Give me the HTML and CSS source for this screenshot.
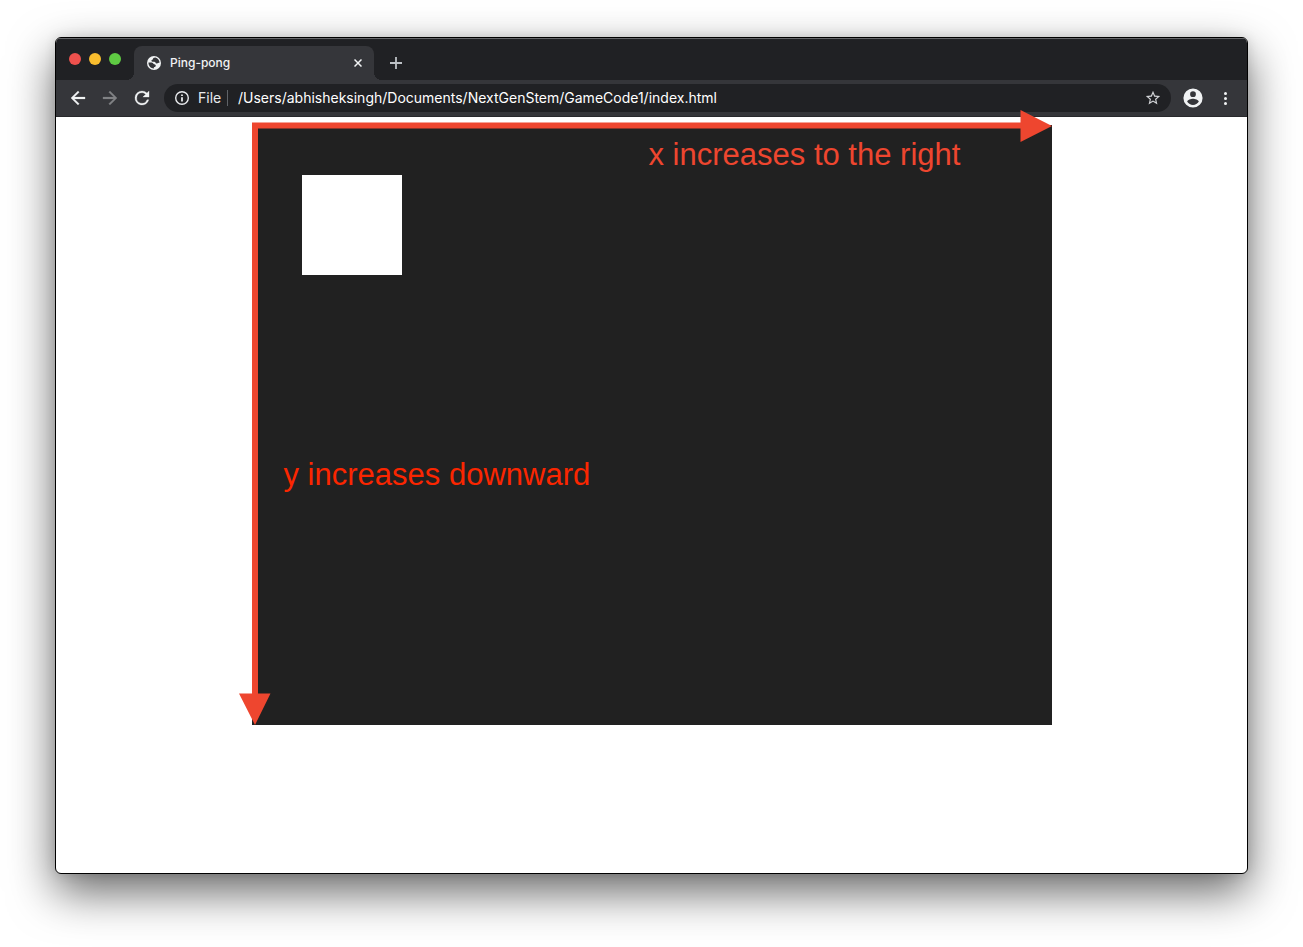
FILE: index.html
```html
<!DOCTYPE html>
<html lang="en">
<head>
<meta charset="utf-8">
<title>Ping-pong</title>
<link rel="stylesheet" href="styles.css">
</head>
<body>
<div class="window">
  <header class="tab-strip">
    <div class="lights">
      <button class="light close" aria-label="Close window"></button>
      <button class="light minimize" aria-label="Minimize window"></button>
      <button class="light maximize" aria-label="Maximize window"></button>
    </div>
    <div class="tab">
      <svg class="favicon" viewBox="0 0 14 14" aria-hidden="true">
        <circle cx="7" cy="7" r="7" fill="#f1f3f4"/>
        <path d="M8.300 1.500C6.800 1.700 5.800 2.300 5.800 3.400C5 3.600 4.300 4.200 4.500 5C4.800 5.900 5.800 5.600 7.200 5.700C8.600 5.800 8.400 7.300 9.600 7.400C10.800 7.500 11.500 6.700 12.500 6.700C12.600 4.200 11 2.100 8.300 1.500ZM1.500 6.500C1.300 9.700 3.800 12.400 6.900 12.500V11.300C7.900 11.200 8.800 10.600 8.800 9.600C8.800 8.300 7.400 8.600 6.700 8C6 7.300 5.700 6.500 4.500 6.500Z" fill="#35363a"/>
      </svg>
      <span class="tab-title">Ping-pong</span>
      <button class="tab-close" aria-label="Close tab">
        <svg width="8" height="8" viewBox="0 0 8 8" fill="none" stroke="#f1f3f4" stroke-width="1.500"><path d="M.5 .5L7.500 7.500M7.500 .5L.5 7.500"/></svg>
      </button>
    </div>
    <button class="new-tab" aria-label="New tab">
      <svg width="12" height="12" viewBox="0 0 12 12" fill="none" stroke="#bdc1c6" stroke-width="1.800"><path d="M6 0V12M0 6H12"/></svg>
    </button>
  </header>
  <nav class="toolbar">
    <button class="tool" aria-label="Back">
      <svg width="22" height="22" viewBox="-.5 -.5 25 25" fill="#f1f3f4" stroke="#f1f3f4" stroke-width=".3"><path d="M20 11H7.830l5.590-5.590L12 4l-8 8 8 8 1.410-1.410L7.830 13H20z"/></svg>
    </button>
    <button class="tool" aria-label="Forward">
      <svg width="22" height="22" viewBox="-.5 -.5 25 25" fill="#818285" stroke="#818285" stroke-width=".3"><path d="M12 4l-1.410 1.410L16.170 11H4v2h12.170l-5.580 5.590L12 20l8-8z"/></svg>
    </button>
    <button class="tool" aria-label="Reload">
      <svg width="22" height="22" viewBox="-.5 -.5 25 25" fill="#f1f3f4" stroke="#f1f3f4" stroke-width=".3"><path d="M17.650 6.350A7.960 7.960 0 0 0 12 4a8 8 0 1 0 7.730 10h-2.080A6 6 0 1 1 12 6c1.660 0 3.140.69 4.220 1.780L13 11h7V4z"/></svg>
    </button>
    <div class="address">
      <svg class="info" viewBox="0 0 16 16" aria-hidden="true">
        <circle cx="8" cy="8" r="6.300" fill="none" stroke="#e8eaed" stroke-width="1.400"/>
        <path d="M7.100 7.200H8.900V11.500H7.100ZM7.100 4.400H8.900V6.100H7.100Z" fill="#e8eaed"/>
      </svg>
      <label class="scheme" for="url">File</label>
      <input class="url" id="url" type="text" value="/Users/abhisheksingh/Documents/NextGenStem/GameCode1/index.html">
      <button class="star" aria-label="Bookmark this page">
        <svg width="18" height="18" viewBox="-.5 -.5 25 25" fill="#d0d2d5"><path d="M22 9.240l-7.190-.62L12 2 9.190 8.630 2 9.240l5.460 4.730L5.820 21 12 17.270 18.180 21l-1.630-7.030zM12 15.400l-3.760 2.270 1-4.280-3.320-2.880 4.380-.38L12 6.100l1.710 4.040 4.380.38-3.320 2.880 1 4.280z"/></svg>
      </button>
    </div>
    <button class="tool" aria-label="Profile">
      <svg width="24" height="24" viewBox="-.5 -.5 25 25" fill="#f1f3f4"><path d="M12 2a10 10 0 1 0 0 20 10 10 0 0 0 0-20zm0 3a3 3 0 1 1 0 6 3 3 0 0 1 0-6zm0 14.200a7.200 7.200 0 0 1-6-3.220c.03-1.990 4-3.080 6-3.080s5.970 1.090 6 3.080a7.200 7.200 0 0 1-6 3.220z"/></svg>
    </button>
    <button class="tool" aria-label="Menu">
      <svg width="3" height="13" viewBox="0 0 3 13" fill="#f1f3f4"><circle cx="1.500" cy="1.500" r="1.500"/><circle cx="1.500" cy="6.500" r="1.500"/><circle cx="1.500" cy="11.500" r="1.500"/></svg>
    </button>
  </nav>
  <main class="page">
    <div class="board">
      <div class="square"></div>
      <svg class="axes" viewBox="0 0 800 600" fill="#ee462f" aria-hidden="true">
        <path d="M0 -2.500H768.500V-15L800 1L768.500 17V3.500H6V568.500H18.500L3 600L-13 568.500H0Z"/>
      </svg>
      <p class="note note-x">x increases to the right</p>
      <p class="note note-y">y increases downward</p>
    </div>
  </main>
</div>
</body>
</html>
```
FILE: styles.css
```css
* {
  box-sizing: border-box;
}

body {
  margin: 0;
  min-height: 100vh;
  padding: 37px 55px 73px;
  display: flex;
  background: #fff;
  font-family: Inter, "Liberation Sans", sans-serif;
}

button {
  display: flex;
  align-items: center;
  justify-content: center;
  padding: 0;
  border: 0;
  background: none;
}

.window {
  flex: 1;
  min-width: 0;
  display: flex;
  flex-direction: column;
  border: 1px solid #000;
  border-radius: 6px;
  overflow: hidden;
  background: #fff;
  box-shadow: 0 18px 46px rgba(0, 0, 0, 0.6), 0 0 12px rgba(0, 0, 0, 0.12);
}

.tab-strip {
  height: 42px;
  display: flex;
  align-items: flex-end;
  padding-left: 13px;
  background: #202124;
  box-shadow: inset 0 1px #66676a;
}

.lights {
  height: 42px;
  display: flex;
  align-items: center;
  gap: 8px;
  margin-right: 13px;
}

.light {
  width: 12px;
  height: 12px;
  border-radius: 50%;
}

.close {
  background: #ee514d;
}

.minimize {
  background: #f9bd2e;
}

.maximize {
  background: #5fcb43;
}

.tab {
  position: relative;
  width: 240px;
  height: 34px;
  display: flex;
  align-items: center;
  padding: 0 8px 0 13px;
  border-radius: 8px 8px 0 0;
  background: #35363a;
}

.tab::before,
.tab::after {
  content: "";
  position: absolute;
  bottom: 0;
  width: 8px;
  height: 8px;
}

.tab::before {
  right: 100%;
  background: radial-gradient(circle at 0 0, transparent 8px, #35363a 8px);
}

.tab::after {
  left: 100%;
  background: radial-gradient(circle at 100% 0, transparent 8px, #35363a 8px);
}

.favicon {
  width: 14px;
  height: 14px;
  margin-right: 9px;
}

.tab-title {
  flex: 1;
  color: #f1f3f4;
  font-size: 12px;
  line-height: 16px;
  font-weight: 500;
}

.tab-close {
  width: 16px;
  height: 16px;
}

.new-tab {
  width: 28px;
  height: 34px;
  margin-left: 8px;
}

.toolbar {
  height: 37px;
  display: flex;
  align-items: center;
  padding: 0 6px;
  background: #35363a;
  border-bottom: 1px solid #28292c;
}

.tool {
  flex: none;
  width: 32px;
  height: 28px;
}

.address {
  flex: 1;
  min-width: 0;
  height: 28px;
  display: flex;
  align-items: center;
  margin: 0 6px;
  padding: 0 9px 0 10px;
  border-radius: 14px;
  background: #202124;
}

.info {
  flex: none;
  width: 16px;
  height: 16px;
  margin-right: 8px;
}

.scheme {
  width: 30px;
  border-right: 1px solid #5f6368;
  color: #e8eaed;
  font-size: 14px;
  line-height: 16px;
}

.url {
  flex: 1;
  min-width: 0;
  padding: 0 0 0 10px;
  border: 0;
  outline: 0;
  background: none;
  color: #fff;
  font-family: inherit;
  font-size: 14px;
  line-height: 16px;
}

.page {
  flex: 1;
  display: flex;
  justify-content: center;
  align-items: flex-start;
  padding: 8px;
}

.board {
  position: relative;
  width: 800px;
  height: 600px;
  padding: 50px;
  background: #212121;
}

.square {
  width: 100px;
  height: 100px;
  background: #fff;
}

.axes {
  position: absolute;
  inset: 0;
  overflow: visible;
}

.note {
  position: absolute;
  margin: 0;
  font-family: "Liberation Sans", Arial, sans-serif;
  font-size: 31px;
  line-height: 36px;
  white-space: nowrap;
}

.note-x {
  left: 397px;
  top: 12px;
  color: #ee462f;
}

.note-y {
  left: 32px;
  top: 332px;
  color: #fb2600;
}
```
